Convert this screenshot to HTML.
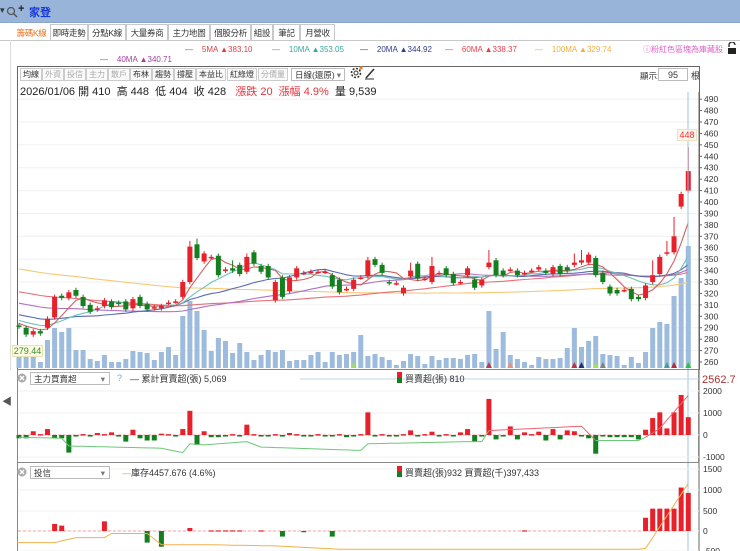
<!DOCTYPE html>
<html><head><meta charset="utf-8">
<style>
*{margin:0;padding:0;box-sizing:border-box}
body{width:740px;height:551px;overflow:hidden;background:#fff;font-family:"Liberation Sans","Noto Sans CJK TC",sans-serif;position:relative;font-size:10px;color:#333}
.a{position:absolute;white-space:nowrap}
.top{position:absolute;left:0;top:0;width:740px;height:23px;background:#98b4d8;border-bottom:1px solid #8aa6cc}
.tab{position:absolute;top:24px;height:17px;border:1px solid #c8c8c8;border-bottom:none;font-size:8.5px;line-height:16px;text-align:center;color:#333;background:#fff;white-space:nowrap;overflow:hidden;letter-spacing:-0.3px}
.btn{position:absolute;top:68px;height:13px;border:1px solid #ccc;font-size:8px;line-height:11px;padding:0 1px;color:#333;background:#fafafa;white-space:nowrap;overflow:hidden;text-align:center}
.g{color:#aaa}
.sel{position:absolute;border:1px solid #bbb;background:#fff;font-size:8.5px;line-height:12px;padding-left:3px;color:#333;white-space:nowrap;overflow:hidden}
</style></head><body>
<div class="top"></div>
<div class="a" style="left:0;top:5px;font-size:9px;color:#333">▾</div>
<svg class="a" style="left:6px;top:6px" width="12" height="12"><circle cx="5" cy="5" r="3.5" fill="none" stroke="#555" stroke-width="1.2"/><line x1="7.5" y1="7.5" x2="11" y2="11" stroke="#555" stroke-width="1.5"/></svg>
<div class="a" style="left:18px;top:3px;font-size:11px;font-weight:bold;color:#222">+</div>
<div class="a" style="left:29px;top:4px;font-size:11px;font-weight:bold;color:#1438d8">家登</div>

<div class="tab" style="left:13px;width:37px;color:#e8731a;border-color:#fff">籌碼K線</div>
<div class="tab" style="left:50px;width:38px">即時走勢</div>
<div class="tab" style="left:88px;width:38px">分點K線</div>
<div class="tab" style="left:126px;width:42px">大量券商</div>
<div class="tab" style="left:168px;width:42px">主力地圖</div>
<div class="tab" style="left:210px;width:41px">個股分析</div>
<div class="tab" style="left:251px;width:22px">組設</div>
<div class="tab" style="left:273px;width:27px">筆記</div>
<div class="tab" style="left:300px;width:35px">月營收</div>
<div class="a" style="left:0;top:40px;width:740px;border-top:1px solid #c8c8c8"></div>
<div class="a" style="left:10px;top:40px;height:330px;border-left:1px solid #ddd"></div>

<div class="a" style="left:185px;top:45px;font-size:8px;color:#d9414b">—&nbsp;&nbsp;&nbsp;&nbsp;5MA ▲383.10</div>
<div class="a" style="left:272px;top:45px;font-size:8px;color:#3aa8a0">—&nbsp;&nbsp;&nbsp;&nbsp;10MA ▲353.05</div>
<div class="a" style="left:360px;top:45px;font-size:8px;color:#303d8c">—&nbsp;&nbsp;&nbsp;&nbsp;20MA ▲344.92</div>
<div class="a" style="left:445px;top:45px;font-size:8px;color:#e84050">—&nbsp;&nbsp;&nbsp;&nbsp;60MA ▲338.37</div>
<div class="a" style="left:535px;top:45px;font-size:8px;color:#f0b040">—&nbsp;&nbsp;&nbsp;&nbsp;100MA ▲329.74</div>
<div class="a" style="left:643px;top:44px;font-size:8px;color:#e060c8">ⓘ粉紅色區塊為庫藏股</div>
<svg class="a" style="left:727px;top:42px" width="10" height="12"><path d="M2 5 V3 a3 3 0 0 1 6 0" fill="none" stroke="#222" stroke-width="1.3"/><rect x="1" y="6" width="8" height="6" fill="#222"/></svg>
<div class="a" style="left:100px;top:55px;font-size:8px;color:#a040a0">—&nbsp;&nbsp;&nbsp;&nbsp;40MA ▲340.71</div>

<div class="a" style="left:17px;top:66px;width:683px;height:304px;border:1px solid #666;border-bottom:none"></div>
<div class="btn" style="left:20px;width:22px">均線</div>
<div class="btn g" style="left:42px;width:22px">外資</div>
<div class="btn g" style="left:64px;width:22px">投信</div>
<div class="btn g" style="left:86px;width:22px">主力</div>
<div class="btn g" style="left:108px;width:22px">散戶</div>
<div class="btn" style="left:130px;width:22px">布林</div>
<div class="btn" style="left:152px;width:22px">趨勢</div>
<div class="btn" style="left:174px;width:22px">撐壓</div>
<div class="btn" style="left:196px;width:30px">本益比</div>
<div class="btn" style="left:227px;width:30px">紅綠燈</div>
<div class="btn g" style="left:258px;width:30px">分價量</div>
<div class="sel" style="left:291px;top:68px;width:54px;height:13px">日線(還原)<span style="position:absolute;right:3px;color:#777">▾</span></div>
<svg class="a" style="left:349px;top:66px" width="14" height="14"><circle cx="7" cy="7" r="4.5" fill="none" stroke="#333" stroke-width="1.6" stroke-dasharray="2 1.5"/><circle cx="7" cy="7" r="2" fill="none" stroke="#333"/><circle cx="12" cy="2" r="1.6" fill="#f08020"/></svg>
<svg class="a" style="left:364px;top:67px" width="12" height="13"><path d="M2 11 L10 2" stroke="#333" stroke-width="1.6"/><path d="M1 12 H10" stroke="#333"/></svg>
<div class="a" style="left:640px;top:70px;font-size:8.5px;color:#333">顯示:</div>
<div class="a" style="left:658px;top:68px;width:30px;height:13px;border:1px solid #bbb;font-size:9px;text-align:center;line-height:12px">95</div>
<div class="a" style="left:691px;top:69px;font-size:9px">根</div>
<div class="a" style="left:20px;top:83px;font-size:11px;color:#222">2026/01/06 開 410&nbsp; 高 448&nbsp; 低 404&nbsp; 收 428&nbsp;&nbsp; <span style="color:#e8323c">漲跌 20&nbsp; 漲幅 4.9%</span>&nbsp; 量 9,539</div>
<div class="a" style="left:2px;top:393px;font-size:10px;color:#555">◀</div>

<svg id="ch" class="a" style="left:0;top:0" width="740" height="551"></svg>

<div class="a" style="left:12px;top:345px;width:31px;height:12px;background:#fdfbe0;border:1px solid #e8e4b0;color:#3a8a3a;font-size:9px;line-height:10px;text-align:center">279.44</div>
<div class="a" style="left:677px;top:129px;width:20px;height:12px;background:#fdf6e8;border:1px solid #f0e0c0;color:#e8323c;font-size:9px;line-height:10px;text-align:center">448</div>

<svg class="a" style="left:17px;top:373px" width="10" height="10"><circle cx="5" cy="5" r="4.5" fill="#aaa"/><path d="M3 3 L7 7 M7 3 L3 7" stroke="#fff" stroke-width="1.3"/></svg>
<div class="sel" style="left:30px;top:372px;width:80px;height:13px">主力買賣超<span style="position:absolute;right:4px;color:#777">▾</span></div>
<div class="a" style="left:117px;top:373px;font-size:9px;color:#7aa8d8">?</div>
<div class="a" style="left:130px;top:372px;font-size:9px;color:#333">—&nbsp;累計買賣超(張) 5,069</div>
<svg class="a" style="left:397px;top:372px" width="5" height="11"><rect width="5" height="5.5" fill="#e8202a"/><rect y="5.5" width="5" height="5.5" fill="#137f1e"/></svg>
<div class="a" style="left:405px;top:372px;font-size:9px;color:#333">買賣超(張) 810</div>
<div class="a" style="left:702px;top:374px;font-size:11px;color:#b03030">2562.7</div>

<svg class="a" style="left:17px;top:467px" width="10" height="10"><circle cx="5" cy="5" r="4.5" fill="#aaa"/><path d="M3 3 L7 7 M7 3 L3 7" stroke="#fff" stroke-width="1.3"/></svg>
<div class="sel" style="left:30px;top:466px;width:80px;height:13px">投信<span style="position:absolute;right:4px;color:#777">▾</span></div>
<div class="a" style="left:122px;top:466px;font-size:9px;color:#333"><span style="color:#f0a030">—</span>庫存4457.676 (4.6%)</div>
<svg class="a" style="left:397px;top:466px" width="5" height="11"><rect width="5" height="5.5" fill="#e8202a"/><rect y="5.5" width="5" height="5.5" fill="#137f1e"/></svg>
<div class="a" style="left:405px;top:466px;font-size:9px;color:#333">買賣超(張)932 買賣超(千)397,433</div>

<script>
(function(){
var oc=[[292,291],[290,284],[284,287],[287,285],[290,298],[299,317],[318,316],[316,321],[323,318],[317,309],[310,304],[306,307],[309,314],[313,308],[312,311],[313,306],[307,315],[317,309],[311,306],[307,308],[307,309],[312,312],[313,313],[317,330],[330,361],[363,351],[348,355],[352,352],[353,336],[340,341],[342,340],[345,337],[339,352],[356,346],[344,339],[344,334],[314,330],[334,317],[322,334],[334,342],[338,338],[339,339],[339,339],[339,339],[336,326],[332,321],[324,324],[324,332],[334,334],[335,349],
[350,345],[345,338],[330,329],[329,329],[320,325],[335,340],[346,333],[333,333],[330,344],[338,338],[342,336],[337,329],[330,330],[336,342],[332,325],[327,332],[343,347],[349,336],[340,336],[341,341],[340,336],[338,338],[340,340],[341,343],[340,338],[337,343],[344,337],[343,340],[345,347],[347,349],[347,354],[351,336],[338,330],[326,320],[323,320],[323,323],[324,315],[317,315],[316,327],[330,336],[337,352],[355,356],[356,370],[396,407],[410,427]];
var hi={24:366,25:368,32:355,49:352,55:347,58:352,66:358,78:355,79:358,91:366,92:387,94:448,89:349,30:349,33:358};
var vol=[13,13,11,6,28,40,36,40,18,18,9,7,13,6,6,9,17,16,15,8,16,21,13,52,67,57,38,17,30,27,15,25,16,8,13,18,16,18,7,8,8,13,16,6,16,13,14,16,33,12,14,11,8,3,7,14,12,4,12,8,10,10,9,13,14,6,57,19,36,13,9,6,3,11,9,9,10,20,40,21,27,32,14,13,12,3,11,5,16,40,46,44,72,90,122];
var S=document.getElementById('ch'),h='';
function X(i){return 19+i*7.12}
function PY(p){return 122+(470-p)*1.143}
function P(x,y){return x.toFixed(1)+' '+y.toFixed(1)}
for(var p=260;p<=490;p+=10){var y=PY(p);if(p%20==10)h+='<line x1="18" x2="699" y1="'+y+'" y2="'+y+'" stroke="#f0f0f0"/>';h+='<line x1="699" x2="702" y1="'+y+'" y2="'+y+'" stroke="#666"/><text x="704" y="'+(y+3)+'" font-size="8.5" fill="#333" font-family="Liberation Sans">'+p+'</text>';}
h+='<line x1="699" x2="699" y1="92" y2="551" stroke="#666"/>';
for(var i=0;i<95;i++){h+='<rect x="'+(X(i)-2.5)+'" y="'+(368-vol[i])+'" width="5" height="'+vol[i]+'" fill="#9dbbdc"/>';}
var all=[];for(var k=0;k<100;k++)all.push(392-k*1.0);
oc.forEach(function(v){all.push(v[1])});
function ma(n,col){var d='';for(var i=0;i<95;i++){var s=0;for(var j=0;j<n;j++)s+=all[100+i-j];d+=(i?'L':'M')+P(X(i),PY(s/n));}h+='<path d="'+d+'" fill="none" stroke="'+col+'" stroke-width="1.1"/>';}
ma(100,'#f5c878');ma(60,'#e8707a');ma(40,'#b070c0');ma(20,'#5a6ab0');ma(10,'#70c0b8');ma(5,'#d06060');
for(var i=0;i<95;i++){var o=oc[i][0],c=oc[i][1],up=c>=o,col=up?'#e8202a':'#137f1e';var tp=Math.max(o,c),bt=Math.min(o,c);var H=hi[i]||tp+2,Lw=bt-2;
h+='<line x1="'+X(i)+'" x2="'+X(i)+'" y1="'+PY(H)+'" y2="'+PY(Lw)+'" stroke="'+col+'"/>';var ht=Math.max(1.5,(tp-bt)*1.143);h+='<rect x="'+(X(i)-2.5)+'" y="'+PY(tp)+'" width="5" height="'+ht+'" fill="'+col+'"/>';}
h+='<line x1="688" x2="688" y1="92" y2="551" stroke="#9cc0e8"/>';
h+='<rect x="17.5" y="369.5" width="681" height="93" fill="none" stroke="#888"/><line x1="17" x2="699" y1="462.5" y2="462.5" stroke="#888"/><line x1="17.5" x2="17.5" y1="462" y2="551" stroke="#888"/>';
h+='<line x1="300" x2="699" y1="379" y2="379" stroke="#c0d4ee"/>';
var z1=435,s1=0.022;
[[2000,391],[1000,413],[0,435],[-1000,457]].forEach(function(a){h+='<line x1="18" x2="699" y1="'+a[1]+'" y2="'+a[1]+'" stroke="#f0f0f0"/><text x="703" y="'+(a[1]+3)+'" font-size="8.5" fill="#333" font-family="Liberation Sans">'+a[0]+'</text>';});
h+='<line x1="18" x2="688" y1="435" y2="435" stroke="#f0a0a0" stroke-dasharray="3 2"/>';
var b1={2:170,4:270,11:90,13:120,16:240,20:60,23:270,24:1100,26:170,32:470,38:90,49:1030,55:210,58:150,62:120,63:270,66:1640,69:390,71:120,73:150,75:270,77:210,78:170,88:240,89:770,90:1030,91:300,92:1030,93:1820,94:810,
0:-150,1:-150,5:-150,6:-150,7:-800,15:-300,17:-150,18:-250,19:-250,25:-450,27:-100,28:-100,46:-100,64:-300,67:-200,70:-200,74:-250,76:-200,80:-150,81:-850,83:-100,84:-100,85:-100,86:-100,87:-200};
for(var i=0;i<95;i++){var v=b1[i];if(v===undefined)v=(i%3==0)?40:-70;var yy=z1-v*s1;h+='<rect x="'+(X(i)-2.5)+'" y="'+Math.min(z1,yy)+'" width="5" height="'+Math.max(1.5,Math.abs(v*s1))+'" fill="'+(v>0?'#e8202a':'#137f1e')+'"/>';}
function interp(kp){var out=[];for(var k=0;k<kp.length-1;k++){var a=kp[k],b=kp[k+1];for(var i=a[0];i<b[0]||(k==kp.length-2&&i<=b[0]);i++){var t=(i-a[0])/(b[0]-a[0]);out.push(a[1]+(b[1]-a[1])*t);}}return out;}
var seg=interp([[0,-100],[6,-150],[7,-500],[20,-600],[23,-800],[24,-400],[26,-450],[32,-300],[34,-550],[48,-700],[49,-400],[63,-300],[65,-300],[66,200],[79,400],[81,-250],[87,-250],[88,-100],[90,300],[94,1800]]);
function path(a,b,col){var d='';for(var i=a;i<=b;i++)d+=(i>a?'L':'M')+P(X(i),z1-seg[i]*s1);h+='<path d="'+d+'" fill="none" stroke="'+col+'"/>';}
path(0,66,'#6cc87a');path(81,88,'#6cc87a');path(66,81,'#f06070');path(88,94,'#f06070');
var z2=531,s2=0.0414;
[[1500,469],[1000,490],[500,511],[0,531],[-500,551]].forEach(function(a){h+='<line x1="18" x2="699" y1="'+a[1]+'" y2="'+a[1]+'" stroke="#f0f0f0"/><text x="703" y="'+(a[1]+3)+'" font-size="8.5" fill="#333" font-family="Liberation Sans">'+a[0]+'</text>';});
h+='<line x1="18" x2="688" y1="531" y2="531" stroke="#f0a0a0" stroke-dasharray="3 2"/>';
var b2={5:170,6:130,12:233,18:-280,20:-380,24:72,27:15,28:15,29:15,30:15,31:15,34:15,37:-135,40:-30,44:-135,71:15,88:320,89:540,90:540,91:540,92:540,93:1050,94:920};
Object.keys(b2).forEach(function(k){var v=b2[k],i=+k,yy=z2-v*s2;h+='<rect x="'+(X(i)-2.5)+'" y="'+Math.min(z2,yy)+'" width="5" height="'+Math.max(1.2,Math.abs(v*s2))+'" fill="'+(v>0?'#e8202a':'#137f1e')+'"/>';});
var s3=interp([[0,-280],[5,-280],[8,-160],[12,-160],[13,-60],[18,-60],[20,-330],[26,-330],[36,-360],[45,-440],[87,-440],[88,-420],[94,1150]]);
var d2='M17 '+(z2+280*s2);for(var i=0;i<95;i++)d2+='L'+P(X(i),z2-s3[i]*s2);
h+='<path d="'+d2+'" fill="none" stroke="#f0b050"/>';
[[47,'#a0e060'],[66,'#b04050'],[69,'#e89080'],[78,'#c03040'],[79,'#203080'],[81,'#a0e060'],[82,'#808080'],[91,'#40a0a0'],[92,'#b03040'],[94,'#30c040']].forEach(function(t){var x=X(t[0]);h+='<path d="M'+(x-3)+' 368 L'+x+' 362 L'+(x+3)+' 368Z" fill="'+t[1]+'"/>';});
S.innerHTML=h;
})();
</script>
</body></html>
